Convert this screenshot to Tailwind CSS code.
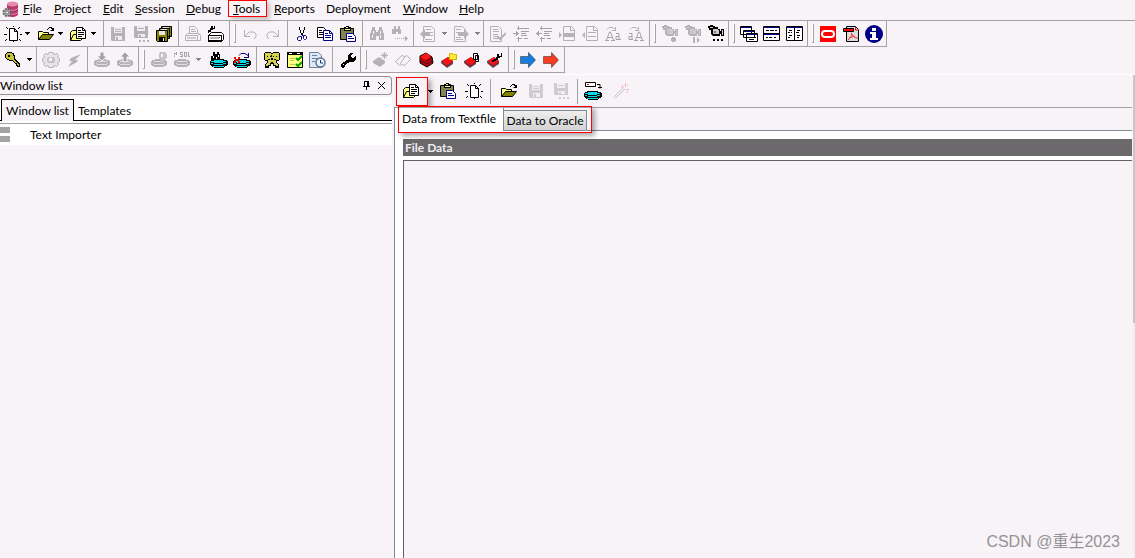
<!DOCTYPE html>
<html lang="en">
<head>
<meta charset="utf-8">
<title>Text Importer</title>
<script src="https://cdn.jsdelivr.net/npm/@tailwindcss/browser@4"></script>
</head>
<body class="h-screen flex flex-col overflow-hidden bg-[#f7f3f7] text-black text-[12px] leading-4 font-['Lato','Noto_Sans','Noto_Sans_CJK_SC',sans-serif]">

<svg class="hidden" shape-rendering="crispEdges">
  <symbol id="page" viewBox="0 0 18 16"><path d="M5.500 2.500h5l3 3v9h-8z" fill="#fff" stroke="#000"/><path d="M10.500 2.500v3h3" fill="none" stroke="#000"/><path d="M9 0h1v1H9zM2 1h1v1H2zM3 2h1v1H3zM15 1h1v1h-1zM14 2h1v1h-1zM0 8h3v1H0zM16 8h2v1h-2zM2 13h1v1H2zM1 14h1v1H1zM15 13h1v1h-1zM16 14h1v1h-1zM9 15h1v1H9z"/></symbol>
  <symbol id="open" viewBox="0 0 16 16"><path d="M.5 13.500v-8h4l1 1h5v3" fill="#ffff84" stroke="#000"/><path d="M.5 13.500l4-5h11l-4 5z" fill="#848200" stroke="#000"/><path d="M9 3h1V2h1V1h3v1h1v2h-1v-1h-1V2h-2v1h-1v1H9zM12 4h4v1h-3zM15 2h1v3h-1z"/></symbol>
  <symbol id="project" viewBox="0 0 17 16"><path d="M.5 14.500v-8l2-2h5v10z" fill="#ffff84" stroke="#000"/><path d="M6.500 1.500h6l3 3v8h-9z" fill="#fff" stroke="#000"/><path d="M12.500 1.500v3h3M8 4.500h3M8 6.500h6M8 8.500h6M8 10.500h4" fill="none" stroke="#000"/><path d="M.5 14.500l3-6h3v4h6l-2 2z" fill="#ffff84" stroke="#000"/></symbol>
  <symbol id="save" viewBox="0 0 16 16"><path d="M1 1h14v14H2l-1-1z" fill="#b5b2b5"/><path d="M4 1h8v6H4zM5 10h7v4H5z" fill="#efebef"/><path d="M5 3h6v1H5zM5 5h6v1H5zM6 11h2v3H6z" fill="#b5b2b5"/></symbol>
  <symbol id="saveas" viewBox="0 0 16 18"><path d="M1 1h14v12H2l-1-1z" fill="#b5b2b5"/><path d="M4 1h8v5H4zM5 9h7v3H5z" fill="#efebef"/><path d="M5 3h6v1H5zM6 10h2v2H6zM6 15h2v2H6zM10 15h2v2h-2zM14 15h2v2h-2z" fill="#b5b2b5"/></symbol>
  <symbol id="saveall" viewBox="0 0 16 16"><path d="M5.500.5h10v10h-10zM3.500 2.500h10v10h-10z" fill="#848200" stroke="#000"/><path d="M.5 4.500h11v11h-10l-1-1z" fill="#848200" stroke="#000"/><path d="M3 5h6v4H3zM7 1h6v1H7zM5 3h6v1H5z" fill="#e7e3e7"/><path d="M3 11h6v4H3z"/><path d="M7 12h1v3H7z" fill="#fff"/></symbol>
  <symbol id="print" viewBox="0 0 16 16"><path d="M4.500 7.500v-7h5l3 3v4" fill="#f7f3f7" stroke="#b5b2b5"/><path d="M6 3.500h4M6 5.500h5M.5 9.500l2-2h11l2 2v5h-15zM.5 9.500h12v5M12.500 9.500l3-2" fill="none" stroke="#b5b2b5"/><path d="M2 11h9v2H2z" fill="#ceCBce"/></symbol>
  <symbol id="psetup" viewBox="0 0 17 17"><path d="M1.500 10.500l3-3h10l2 2v5l-2 2h-13z" fill="#fff" stroke="#000"/><path d="M1 10h14v1H1zM1 15h14v2H1zM14 10h1v6h-1z"/><path d="M3 12h9v2H3z" fill="#b5b2b5"/><path d="M12 12h1v1h-1z" fill="red"/><path d="M1 5h2V3h1V1h2v2h1V1h1v3H6v1H4v2H2v1H1z"/></symbol>
  <symbol id="undo" viewBox="0 0 16 16"><path d="M2.500 4v6.500H8M3 10l4-4h5l2 2v3l-2 2" fill="none" stroke="#b5b2b5"/></symbol>
  <symbol id="redo" viewBox="0 0 16 16"><path d="M13.500 4v6.500H8M13 10L9 6H4L2 8v3l2 2" fill="none" stroke="#b5b2b5"/></symbol>
  <symbol id="cut" viewBox="0 0 16 16"><path d="M5 1h1v3h1v3h1v2H7V7H6V4H5zM10 1h1v3h-1v3H9v2H8V7h1V4h1z"/><path d="M8.500 8v2M5.500 10.500h2v3l-1 1h-2l-1-1v-2zM9.500 9.500h2l1 1v2l-1 1h-1l-1-1z" fill="none" stroke="#000084"/></symbol>
  <symbol id="copy" viewBox="0 0 16 16"><path d="M.5 1.500h6l2 2v8h-8z" fill="#fff" stroke="#000"/><path d="M2 4.500h3M2 6.500h5M2 8.500h5" stroke="#000"/><path d="M6.500 4.500h6l3 3v7h-9z" fill="#fff" stroke="#000084"/><path d="M12.500 4.500v3h3M8 7.500h3M8 9.500h6M8 11.500h6" fill="none" stroke="#000084"/></symbol>
  <symbol id="paste" viewBox="0 0 16 16"><path d="M.5 2.500h13v11H.5z" fill="#848252" stroke="#000"/><path d="M4 1h2V0h3v1h2v4H4z"/><path d="M5 3h5v1H5zM6 1h2v1H6z" fill="#ffff84"/><path d="M6.500 7.500h6l3 3v5h-9z" fill="#fff" stroke="#000084"/><path d="M8 10.500h4M8 12.500h6" stroke="#000084"/></symbol>
  <symbol id="find" viewBox="0 0 16 16"><path d="M3 1h3v3h1v2h2V4h1V1h3v3h1v3h1v7h-5v-4H7v4H1V7h1V4h1z" fill="#b5b2b5"/><path d="M4 5h1v3H4zM3 9h1v3H3zM11 5h1v3h-1zM11 9h1v3h-1z" fill="#f7f3f7"/></symbol>
  <symbol id="findnext" viewBox="0 0 16 16"><path d="M2 0h2v3h2V0h2v3h1v5H6V6H4v2H0V3h2z" fill="#b5b2b5"/><path d="M3 12h1v1H3zM5 12h1v1H5zM7 12h1v1H7zM9 12h1v1H9zM11 12h5v1h-5zM13 10h1v5h-1zM14 11h1v3h-1z" fill="#b5b2b5"/></symbol>
  <symbol id="back" viewBox="0 0 16 16"><path d="M3.500.5h8l3 3v12h-11z" fill="#f7f3f7" stroke="#b5b2b5"/><path d="M6 3.500h5M10 6.500h3M10 9.500h3M5 13.500h7" stroke="#b5b2b5"/><path d="M0 8l5-5v3h5v4H5v3z" fill="#b5b2b5"/></symbol>
  <symbol id="fwd" viewBox="0 0 16 16"><path d="M1.500.5h8l3 3v12h-11z" fill="#f7f3f7" stroke="#b5b2b5"/><path d="M3 3.500h5M3 6.500h3M3 11.500h5M3 13.500h7" stroke="#b5b2b5"/><path d="M16 8l-5-5v3H5v4h6v3z" fill="#b5b2b5"/></symbol>
  <symbol id="check" viewBox="0 0 16 16"><path d="M.5.500h8l3 3v12H.5z" fill="none" stroke="#b5b2b5"/><path d="M3 3.500h5M3 5.500h6M3 8.500h5M3 10.500h4M3 12.500h5" stroke="#b5b2b5"/><path d="M7 10l3 3 6-6" fill="none" stroke="#b5b2b5" stroke-width="2"/></symbol>
  <symbol id="indent" viewBox="0 0 16 16"><path d="M4 2.500h12M8 5.500h8M8 7.500h5M8 9.500h6M4 12.500h5M11 12.500h4M0 7.500h6M5.500 0v4M5.500 11v5M3.500 5v5M4.500 6v3" stroke="#a5a2a5"/></symbol>
  <symbol id="outdent" viewBox="0 0 16 16"><path d="M4 2.500h12M8 5.500h8M8 7.500h5M8 9.500h6M4 12.500h5M11 12.500h4M0 7.500h6M5.500 0v4M5.500 11v5M2.500 5v5M1.500 6v3" stroke="#a5a2a5"/></symbol>
  <symbol id="comment" viewBox="0 0 16 16"><path d="M4.500.5h8l3 3v11h-11z" fill="none" stroke="#b5b2b5"/><path d="M4 7h12v4H4zM0 6l3 3-3 3zM11 1h1v3h3v1h-4z" fill="#b5b2b5"/></symbol>
  <symbol id="uncomment" viewBox="0 0 16 16"><path d="M4.500.5h8l3 3v11h-11z" fill="none" stroke="#b5b2b5"/><path d="M6 6h8v1H6zM6 10h8v1H6zM3 6L0 9l3 3zM11 1h1v3h3v1h-4z" fill="#b5b2b5"/></symbol>
  <symbol id="upper" viewBox="0 0 16 16"><path d="M2 3.500l2-2h4l2 2M10.500 1v4M7 4.500h4" fill="none" stroke="#b5b2b5"/><path d="M0 14.500h4M6 14.500h4M1.500 14l3-8h1l3 8M3 11.500h5M11 7.500h3v6.500M14 10.500h-3v3h5" fill="none" stroke="#a5a2a5"/></symbol>
  <symbol id="lower" viewBox="0 0 16 16"><path d="M2 3.500l2-2h4l2 2M10.500 1v4M7 4.500h4" fill="none" stroke="#b5b2b5"/><path d="M6 14.500h4M12 14.500h4M7.500 14l3-8h1l3 8M9 11.500h5M1 7.500h3v6.500M4 10.500H1v3h4" fill="none" stroke="#a5a2a5"/></symbol>
  <symbol id="camera" viewBox="0 0 16 18"><path d="M0 1h2V0h3v1h2v1h3v2h2v2h1V4h3v7h-3V9h-1v2H5l-2-2V5H1V3H0z" fill="currentColor"/><path d="M2 2h3v1H2zM5 4h5v1H5zM5 5h6v4H5zM14 5h1v5h-1z" fill="#cecbce"/><path d="M6 6h2v2H6z" fill="currentColor" opacity=".4"/></symbol>
  <symbol id="rec" viewBox="0 0 16 18"><use href="#camera"/><path d="M10 12h3v1h1v3h-1v1h-3v-1H9v-3h1z" fill="#b5b2b5"/></symbol>
  <symbol id="play" viewBox="0 0 16 18"><use href="#camera"/><path d="M8 12h2v6H8zM12 12l3 3-3 3z" fill="#b5b2b5"/></symbol>
  <symbol id="dots" viewBox="0 0 16 18"><use href="#camera"/><path d="M5 14h2v2H5zM9 14h2v2H9zM13 14h2v2h-2z"/></symbol>
  <symbol id="cascade" viewBox="0 0 18 16"><path d="M.5.500h11v8H.5zM3.500 4.500h11v7h-11zM6.500 7.500h11v8h-11z" fill="#fff" stroke="#000"/><path d="M1 1h10v1H1zM4 5h10v1H4zM7 8h10v1H7z" fill="#000084"/><path d="M9 11.500h3M13 11.500h3M9 13.500h5" stroke="#000"/></symbol>
  <symbol id="tileh" viewBox="0 0 17 16"><path d="M.5.500h16v14H.5z" fill="#fff" stroke="#000"/><path d="M1 1h15v1H1zM1 8h15v1H1z" fill="#000084"/><path d="M0 7.500h17M3 4.500h3M7 4.500h4M12 4.500h2M3 11.500h2M6 11.500h3M11 11.500h2" stroke="#000"/></symbol>
  <symbol id="tilev" viewBox="0 0 17 16"><path d="M.5.500h16v14H.5z" fill="#fff" stroke="#000"/><path d="M1 1h15v1H1z" fill="#000084"/><path d="M8.500 1v14M3 4.500h3M2 6.500h2M5 6.500h1M3 9.500h3M2 11.500h2M11 4.500h3M10 6.500h3M11 9.500h3M11 11.500h2" stroke="#000"/></symbol>
  <symbol id="oracle" viewBox="0 0 16 16"><path d="M0 0h16v16H0z" fill="red"/><rect x="2" y="5" width="12" height="6" rx="3" fill="none" stroke="#fff" stroke-width="2" shape-rendering="auto"/></symbol>
  <symbol id="pdf" viewBox="0 0 16 16"><path d="M3.500.5h9l3 3v12h-12z" fill="#dedbde" stroke="#000"/><path d="M.5 2.500h10v3H.5z" fill="red" stroke="#000"/><path d="M12.500 1v3h3" fill="none" stroke="red"/><path d="M8 7c2 0 0 5-3 7M9 8c1 3 3 4 6 4M6 12l6-2" fill="none" stroke="#e73431" shape-rendering="auto"/></symbol>
  <symbol id="info" viewBox="0 0 18 18"><circle cx="9" cy="9" r="9" fill="#000084"/><path d="M7 3h4v3H7zM5 7h6v6h2v2H5v-2h2V9H5z" fill="#fff"/></symbol>

  <symbol id="key" viewBox="0 0 16 16"><path d="M1 1h1V0h5v1h2v2h1v4h1v1h1v1h1v1h1v1h1v4h-3v-1h-1v-2h-1v-1H9v-1H8V9H4V8H2V7H1V6H0V2h1z"/><path d="M2 1h5v1h1v2h1v4h1v1h1v1h1v1h1v1h1v2h-1v-1h-1v-2h-2v-1H9V9H8V8H4V7H2V6H1V2h1z" fill="#c6c339"/><path d="M3 3h2v2H3z"/></symbol>
  <symbol id="gear" viewBox="0 0 18 16"><path d="M7 .5h4l1 2 3-1 1.500 2-1 2 2 1v3l-2 1 1 2-2 2-2.500-1-1 2H7l-1-2-2.500 1-2-2 1-2-2-1v-3l2-1-1-2 2-2L6 2.500z" fill="#e7e3e7" stroke="#b5b2b5"/><path d="M6 5h6v1h1v4h-1v1H6v-1H5V6h1z" fill="#c6c3c6"/><path d="M7 6h3v3H7z" fill="#f7f3f7"/></symbol>
  <symbol id="bolt" viewBox="0 0 16 16"><path d="M15 2L5 6 3 9h3l-4 6 9-5 1-2H9z" fill="#b5b2b5"/></symbol>
  <symbol id="disk" viewBox="0 0 16 16"><path d="M0 9h1V8h3V7h8v1h3v1h1v4h-1v1h-2v1H3v-1H1v-1H0z" fill="#b5b2b5"/><path d="M3 9h10v1H3zM2 11h1v1h10v-1h1v1h-1v1H3v-1H2z" fill="#dedbde"/></symbol>
  <symbol id="commit" viewBox="0 0 16 16"><use href="#disk"/><path d="M6 0h4v4h3L8 9 3 4h3z" fill="#a5a2a5" stroke="#f7f3f7"/></symbol>
  <symbol id="rollback" viewBox="0 0 16 16"><use href="#disk"/><path d="M6 10h4V5h3L8 0 3 5h3z" fill="#a5a2a5" stroke="#f7f3f7"/></symbol>
  <symbol id="explain" viewBox="0 0 16 16"><use href="#disk"/><path d="M9 0h5l2 2v4l-3 2v3h-3V8L8 6V2z" fill="#c6c3c6"/><path d="M10 2h2v3h-2z" fill="#f7f3f7"/></symbol>
  <symbol id="sql" viewBox="0 0 16 16"><use href="#disk"/><path d="M0 5.500v-4h3M2.500 0v3M6 .5h3M6.500 0v2.500h2V5M6 4.500h2M10.500 0v4.500h2V.5h-2M14.500 0v4.500h2" fill="none" stroke="#a5a2a5"/></symbol>
  <symbol id="cdisk" viewBox="0 0 18 16"><path d="M0 9h1V8h2V7h11v1h3v1h1v4h-1v1h-2v1h-1v1H4v-1H2v-1H1v-1H0z"/><path d="M4 8h9v1h3v1h-3v1H4v-1H1V9h3zM1 11h2v1h10v-1h3v1h-3v1H4v-1H1zM3 14h11v1H3z" fill="#00dbe7"/></symbol>
  <symbol id="dfind" viewBox="0 0 18 16"><use href="#cdisk"/><path d="M3 0h2v2h2V0h2v2h1v6H7V5H6v3H1V4h2z"/><path d="M3 4h1v2H3zM8 3h1v2H8z" fill="#fff"/></symbol>
  <symbol id="drecomp" viewBox="0 0 18 16"><use href="#cdisk"/><path d="M6 3.500l2-2h4l3 2M15.500 1v5M11 5.500h5" fill="none" stroke="#000084"/><path d="M1 5h2v2h2V5h2v2H6v2h1v2H5V9H3v2H1V9h1V7H1z" fill="red"/></symbol>
  <symbol id="masks" viewBox="0 0 16 16"><path d="M1 0h6v1h2V0h6v1h1v7h-1v1h-2v2h1v1h1v4h-4v-2H9v-2H7v2H5v2H1v-4h1v-1h1V9H1V8H0V1h1z"/><path d="M1 1h6v1h2V1h6v7h-3v3h1v1h1v2h-2v-1h-2v-2H9v-1H7v1H6v2H4v1H2v-2h1v-1h1V8H1z" fill="#d6d34a"/><path d="M3 4h1v1H3zM6 4h1v1H6zM9 4h1v1H9zM12 4h1v1h-1zM7 6h2v2H7zM4 7h2v1H4zM10 7h2v1h-2zM7 3h1v2H7z"/></symbol>
  <symbol id="todo" viewBox="0 0 16 16"><path d="M.5 2.500h15v13H.5z" fill="#ffff84" stroke="#000"/><path d="M0 0h16v3H0z"/><path d="M2 1h3v1H2zM10 1h3v1h-3z" fill="#fff"/><path d="M3 6.500h5M3 8.500h4M3 12.500h5" stroke="#c6c352"/><path d="M9 6l2 2 4-4M9 12l2 2 4-4" fill="none" stroke="#00a200" stroke-width="2"/></symbol>
  <symbol id="clockdoc" viewBox="0 0 17 16" shape-rendering="auto"><path d="M.5.500h9l3 3v12H.5z" fill="#dee7f7" stroke="#6b829c"/><path d="M3 3.500h5M3 6.500h6M3 9.500h3" stroke="#6b829c"/><circle cx="11.500" cy="10.500" r="4.500" fill="#e7f3ff" stroke="#5a7194" stroke-width="1.500"/><path d="M11.500 8v3h2.500" fill="none" stroke="#213c63"/></symbol>
  <symbol id="wrench" viewBox="0 0 16 16"><path d="M1 12h1v-1h1v-1h2V9h1V8h2V3h1V2h1V1h3v1h-1v1h-1v2h1v1h2V5h1V4h1v4h-1v1h-1v1H9v1H7v1H6v1H5v2H4v1H2v-1H1z"/><path d="M3 12h1v1H3z" fill="#fff"/></symbol>
  <symbol id="gbook" viewBox="0 0 16 16"><path d="M1 9l6-4 6 4v2l-5 4-7-4z" fill="#b5b2b5"/><path d="M12.500 0v7M9 3.500h7M10 1l5 5M15 1l-5 5" stroke="#b5b2b5"/></symbol>
  <symbol id="obook" viewBox="0 0 16 16" shape-rendering="auto"><path d="M.5 9.500L7 3.500l3 1 2-1 3.500 4-6 6-3-1-2 1z" fill="#f7f3f7" stroke="#b5b2b5"/><path d="M5 12l5-7.500" stroke="#b5b2b5"/></symbol>
  <symbol id="book" viewBox="0 0 16 16"><path d="M2 4l6-3 6 4 1 6-6 4-7-4z" fill="#c60000" stroke="#000"/><path d="M2 5l6-4 5 3-5 4z" fill="#ff1818"/><path d="M8 9l6-3M9 12l5-3M2 8l7 4" fill="none" stroke="#311c31"/></symbol>
  <symbol id="rbook" viewBox="0 0 16 16"><path d="M0 9l7-4 5 4v3l-6 4-6-5z" fill="#5a5163"/><path d="M1 9l6-4 5 4-6 4z" fill="#ff1010"/><path d="M1 11l5 3 6-4" fill="none" stroke="#c60000"/></symbol>
  <symbol id="bookopen" viewBox="0 0 16 16"><use href="#rbook"/><path d="M8.500 1.500h3l1 1h3v5h-7z" fill="#ffeb31" stroke="#d6b200"/></symbol>
  <symbol id="bookcopy" viewBox="0 0 16 16"><use href="#rbook"/><path d="M9.500 1.500h4v6h-4zM11.500 3.500h3v6h-3z" fill="#f7f3f7" stroke="#000"/></symbol>
  <symbol id="bookedit" viewBox="0 0 16 16"><use href="#rbook"/><path d="M5 10V8h2V7h2V5h1V2h2v2h2V1h1v4h-2v1h-2v2H9v1H7v1z"/></symbol>
  <symbol id="arrow" viewBox="0 0 16 16" shape-rendering="auto"><path d="M.5 4.500h8v-4L15.500 8l-7 7.500v-4h-8z" fill="currentColor" stroke="#00000066"/></symbol>
  <symbol id="down" viewBox="0 0 5 3"><path d="M0 0h5v1H4v1H3v1H2V2H1V1H0z" fill="currentColor"/></symbol>
  <symbol id="todisk" viewBox="0 0 18 18"><g transform="translate(0 2)"><use href="#cdisk" width="18" height="16"/></g><path d="M1.500.5h10v4h-10z" fill="#fff" stroke="#000"/><path d="M3 2h2v1H3z" fill="red"/><path d="M13 2.500h3v4M14 5.500h4" fill="none" stroke="#000"/></symbol>
  <symbol id="wand" viewBox="0 0 16 16"><path d="M1 14L10 5M2 15.500L12 6" fill="none" stroke="#c6c3c6"/><path d="M12.500 0v4M9 2l2 2M15 2l-1 1M13 6.500h3M13 8l2 2M8 4.500h2" stroke="#f0b5c0"/></symbol>
  <symbol id="app" viewBox="0 0 17 17" shape-rendering="auto"><path d="M5 3v10c0 4 11 4 11 0V3z" fill="#b5386b"/><path d="M5 7c1 3 10 3 11 0M5 11c1 3 10 3 11 0" fill="none" stroke="#e78aad"/><ellipse cx="10.500" cy="3" rx="5.500" ry="2.500" fill="#e78aad"/><circle cx="5" cy="11.500" r="3.500" fill="#c6c3c6" stroke="#6b696b" stroke-width="2" stroke-dasharray="2 .8"/><circle cx="5" cy="11.500" r="1.500" fill="#fff" stroke="#6b696b"/></symbol>
</svg>

<nav class="relative h-5 shrink-0 flex items-center gap-3 pl-[2px] pb-[2px] whitespace-nowrap" aria-label="Menu">
  <svg class="size-[17px] shrink-0 -mr-2"><use href="#app"/></svg>
  <button class="w-[19px] text-left"><u>F</u>ile</button>
  <button class="w-[37px] text-left"><u>P</u>roject</button>
  <button class="w-5 text-left"><u>E</u>dit</button>
  <button class="w-[39px] text-left"><u>S</u>ession</button>
  <button class="w-[35px] text-left"><u>D</u>ebug</button>
  <button class="relative w-[29px] text-left"><u>T</u>ools<span class="absolute -inset-x-[5px] -top-px bottom-0 border border-[#f00] shadow-[3px_3px_4px_#0003]"></span></button>
  <button class="w-10 text-left"><u>R</u>eports</button>
  <button class="w-[65px] text-left">Deployment</button>
  <button class="w-11 text-left"><u>W</u>indow</button>
  <button class="text-left"><u>H</u>elp</button>
</nav>

<div class="shrink-0 h-[27px] border-t border-[#a5a2a5] flex">
  <div class="flex border-b border-[#a5a2a5] *:h-full *:shrink-0 [&>button]:flex [&>button]:items-center [&>button]:justify-center" role="toolbar" aria-label="Main">
    <button class="w-[23px] ml-px" aria-label="New"><svg class="w-[18px] h-4"><use href="#page"/></svg></button>
    <button class="w-[10px] pr-1" aria-label="New options"><svg class="w-[5px] h-[3px]"><use href="#down"/></svg></button>
    <button class="w-[23px]" aria-label="Open"><svg class="size-4"><use href="#open"/></svg></button>
    <button class="w-[10px] pr-1" aria-label="Open options"><svg class="w-[5px] h-[3px]"><use href="#down"/></svg></button>
    <button class="w-[23px]" aria-label="Open project"><svg class="w-[17px] h-4"><use href="#project"/></svg></button>
    <button class="w-[10px] pr-1" aria-label="Project options"><svg class="w-[5px] h-[3px]"><use href="#down"/></svg></button>
    <span class="w-px mx-[2px] ml-[3px] bg-[#a5a2a5]"></span>
    <button class="w-[23px]" aria-label="Save"><svg class="size-4"><use href="#save"/></svg></button>
    <button class="w-[23px]" aria-label="Save as"><svg class="w-4 h-[18px]"><use href="#saveas"/></svg></button>
    <button class="w-[23px]" aria-label="Save all"><svg class="size-4"><use href="#saveall"/></svg></button>
    <span class="w-px mx-[2px] ml-[3px] bg-[#a5a2a5]"></span>
    <button class="w-[23px]" aria-label="Print"><svg class="size-4"><use href="#print"/></svg></button>
    <button class="w-[23px]" aria-label="Print setup"><svg class="size-[17px]"><use href="#psetup"/></svg></button>
    <span class="w-px bg-[#a5a2a5] ml-[2px]"></span>
    <span class="w-2 py-[3px] pl-1"><span class="block h-full w-[2px] border-r border-b border-[#a5a2a5] bg-white"></span></span>
    <button class="w-[23px]" aria-label="Undo"><svg class="size-4"><use href="#undo"/></svg></button>
    <button class="w-[23px]" aria-label="Redo"><svg class="size-4"><use href="#redo"/></svg></button>
    <span class="w-px mx-[2px] ml-[3px] bg-[#a5a2a5]"></span>
    <button class="w-[23px]" aria-label="Cut"><svg class="size-4"><use href="#cut"/></svg></button>
    <button class="w-[23px]" aria-label="Copy"><svg class="size-4"><use href="#copy"/></svg></button>
    <button class="w-[23px]" aria-label="Paste"><svg class="size-4"><use href="#paste"/></svg></button>
    <span class="w-px mx-[2px] ml-[3px] bg-[#a5a2a5]"></span>
    <button class="w-[23px]" aria-label="Find"><svg class="size-4"><use href="#find"/></svg></button>
    <button class="w-[23px]" aria-label="Find next"><svg class="size-4"><use href="#findnext"/></svg></button>
    <span class="w-px mx-[2px] bg-[#a5a2a5]"></span>
    <button class="w-[23px]" aria-label="Back"><svg class="size-4"><use href="#back"/></svg></button>
    <button class="w-[10px] text-[#848284]" aria-label="Back history"><svg class="w-[5px] h-[3px]"><use href="#down"/></svg></button>
    <button class="w-[23px]" aria-label="Forward"><svg class="size-4"><use href="#fwd"/></svg></button>
    <button class="w-[10px] text-[#848284]" aria-label="Forward history"><svg class="w-[5px] h-[3px]"><use href="#down"/></svg></button>
    <span class="w-px mx-px mr-[2px] bg-[#a5a2a5]"></span>
    <button class="w-[23px]" aria-label="Check"><svg class="size-4"><use href="#check"/></svg></button>
    <button class="w-[23px]" aria-label="Indent"><svg class="size-4"><use href="#indent"/></svg></button>
    <button class="w-[23px]" aria-label="Unindent"><svg class="size-4"><use href="#outdent"/></svg></button>
    <button class="w-[23px]" aria-label="Comment"><svg class="size-4"><use href="#comment"/></svg></button>
    <button class="w-[23px]" aria-label="Uncomment"><svg class="size-4"><use href="#uncomment"/></svg></button>
    <button class="w-[23px]" aria-label="Uppercase"><svg class="size-4"><use href="#upper"/></svg></button>
    <button class="w-[23px]" aria-label="Lowercase"><svg class="size-4"><use href="#lower"/></svg></button>
    <span class="w-px bg-[#a5a2a5] ml-[2px]"></span>
    <span class="w-2 py-[3px] pl-1"><span class="block h-full w-[2px] border-r border-b border-[#a5a2a5] bg-white"></span></span>
    <button class="w-[23px] text-[#b5b2b5]" aria-label="Record macro"><svg class="w-4 h-[18px]"><use href="#rec"/></svg></button>
    <button class="w-[23px] text-[#b5b2b5]" aria-label="Play macro"><svg class="w-4 h-[18px]"><use href="#play"/></svg></button>
    <button class="w-[23px]" aria-label="Macro library"><svg class="w-4 h-[18px]"><use href="#dots"/></svg></button>
    <span class="w-px bg-[#a5a2a5] ml-px"></span>
    <span class="w-2 py-[3px] pl-1"><span class="block h-full w-[2px] border-r border-b border-[#a5a2a5] bg-white"></span></span>
    <button class="w-[23px]" aria-label="Cascade"><svg class="w-[18px] h-4"><use href="#cascade"/></svg></button>
    <button class="w-[23px]" aria-label="Tile horizontally"><svg class="w-[17px] h-4"><use href="#tileh"/></svg></button>
    <button class="w-[23px]" aria-label="Tile vertically"><svg class="w-[17px] h-4"><use href="#tilev"/></svg></button>
    <span class="w-px bg-[#a5a2a5] ml-px"></span>
    <span class="w-2 py-[3px] pl-1"><span class="block h-full w-[2px] border-r border-b border-[#a5a2a5] bg-white"></span></span>
    <button class="w-[23px]" aria-label="Oracle"><svg class="size-4"><use href="#oracle"/></svg></button>
    <button class="w-[23px]" aria-label="PDF manual"><svg class="size-4"><use href="#pdf"/></svg></button>
    <button class="w-[23px]" aria-label="Information"><svg class="size-[18px]"><use href="#info"/></svg></button>
    <span class="w-px bg-[#a5a2a5] ml-px"></span>
  </div>
</div>

<div class="shrink-0 h-[26px] flex">
  <div class="flex border-b border-[#a5a2a5] *:h-full *:shrink-0 [&>button]:flex [&>button]:items-center [&>button]:justify-center" role="toolbar" aria-label="Session">
    <button class="w-[23px] ml-px" aria-label="Log on"><svg class="size-4"><use href="#key"/></svg></button>
    <button class="w-[11px]" aria-label="Log on options"><svg class="w-[5px] h-[3px]"><use href="#down"/></svg></button>
    <span class="w-px mx-[2px] ml-px bg-[#a5a2a5]"></span>
    <button class="w-[23px]" aria-label="Execute"><svg class="w-[18px] h-4"><use href="#gear"/></svg></button>
    <button class="w-[23px]" aria-label="Break"><svg class="size-4"><use href="#bolt"/></svg></button>
    <span class="w-px mx-[2px] bg-[#a5a2a5]"></span>
    <button class="w-[23px]" aria-label="Commit"><svg class="size-4"><use href="#commit"/></svg></button>
    <button class="w-[23px]" aria-label="Rollback"><svg class="size-4"><use href="#rollback"/></svg></button>
    <span class="w-px bg-[#a5a2a5] ml-[2px]"></span>
    <span class="w-2 py-[3px] pl-1"><span class="block h-full w-[2px] border-r border-b border-[#a5a2a5] bg-white"></span></span>
    <button class="w-[23px]" aria-label="Explain plan"><svg class="size-4"><use href="#explain"/></svg></button>
    <button class="w-[23px]" aria-label="SQL"><svg class="size-4"><use href="#sql"/></svg></button>
    <button class="w-[10px] text-[#848284]" aria-label="SQL options"><svg class="w-[5px] h-[3px]"><use href="#down"/></svg></button>
    <button class="w-[23px] ml-1" aria-label="Find database objects"><svg class="w-[18px] h-4"><use href="#dfind"/></svg></button>
    <button class="w-[23px]" aria-label="Compile invalid objects"><svg class="w-[18px] h-4"><use href="#drecomp"/></svg></button>
    <span class="w-px mx-[3px] bg-[#a5a2a5]"></span>
    <button class="w-[23px]" aria-label="Beautifier"><svg class="size-4"><use href="#masks"/></svg></button>
    <button class="w-[23px]" aria-label="To-do list"><svg class="size-4"><use href="#todo"/></svg></button>
    <button class="w-[23px]" aria-label="Event monitor"><svg class="w-[17px] h-4"><use href="#clockdoc"/></svg></button>
    <span class="w-px mx-[3px] bg-[#a5a2a5]"></span>
    <button class="w-[23px]" aria-label="Preferences"><svg class="size-4"><use href="#wrench"/></svg></button>
    <span class="w-px bg-[#a5a2a5] ml-px"></span>
    <span class="w-[7px] py-[3px] pl-1"><span class="block h-full w-[2px] border-r border-b border-[#a5a2a5] bg-white"></span></span>
    <button class="w-[23px]" aria-label="New book"><svg class="size-4"><use href="#gbook"/></svg></button>
    <button class="w-[23px]" aria-label="Read"><svg class="size-4"><use href="#obook"/></svg></button>
    <button class="w-[23px]" aria-label="Book"><svg class="size-4"><use href="#book"/></svg></button>
    <button class="w-[23px]" aria-label="Open book"><svg class="size-4"><use href="#bookopen"/></svg></button>
    <button class="w-[23px]" aria-label="Copy book"><svg class="size-4"><use href="#bookcopy"/></svg></button>
    <button class="w-[23px]" aria-label="Configure book"><svg class="size-4"><use href="#bookedit"/></svg></button>
    <span class="w-px bg-[#a5a2a5] ml-[2px]"></span>
    <span class="w-[7px] py-[3px] pl-1"><span class="block h-full w-[2px] border-r border-b border-[#a5a2a5] bg-white"></span></span>
    <button class="w-[23px] text-[#187ddd]" aria-label="Next"><svg class="size-4"><use href="#arrow"/></svg></button>
    <button class="w-[23px] text-[#f73c21]" aria-label="Next error"><svg class="size-4"><use href="#arrow"/></svg></button>
    <span class="w-px bg-[#a5a2a5] ml-[2px]"></span>
  </div>
</div>

<div class="flex-1 min-h-0 flex border-t border-white mt-px">
  <aside class="w-[392px] shrink-0 mr-[2px] pt-px">
    <header class="h-[19px] flex items-center border border-l-0 border-[#949294] rounded-r-sm pr-[2px]">
      <h2 class="flex-1">Window list</h2>
      <button class="w-[15px] flex justify-center" aria-label="Pin"><svg class="w-[7px] h-[9px]" viewBox="0 0 7 9" shape-rendering="crispEdges"><path d="M1 0h5v5h1v1H4v3H3V6H0V5h1z"/><path d="M2 1h2v4H2z" fill="#fff"/></svg></button>
      <button class="w-[15px] flex justify-center" aria-label="Close"><svg class="size-[9px]" viewBox="0 0 9 9"><path d="M1 1l7 7M8 1L1 8" stroke="#000"/></svg></button>
    </header>
    <div class="mt-[2px] bg-white">
      <div class="flex items-end h-6 pt-[2px] border-b border-black" role="tablist">
        <button class="ml-px h-[22px] w-[73px] -mb-px border border-b-0 border-black bg-[#f7f3f7] whitespace-nowrap" role="tab" aria-selected="true">Window list</button>
        <button class="h-[22px] px-1 pt-[3px]" role="tab" aria-selected="false">Templates</button>
      </div>
      <ul class="mt-[2px] border-t border-[#a5a2a5]">
        <li class="h-[21px] flex items-center">
          <span class="w-[10px] h-[15px] border-y-[6px] border-[#a5a2a5]"></span>
          <span class="ml-5">Text Importer</span>
        </li>
      </ul>
    </div>
  </aside>

  <main class="flex-1 min-w-0 flex flex-col">
    <div class="h-8 shrink-0 flex items-center pl-[5px] [&>button]:h-full [&>button]:flex [&>button]:items-center [&>button]:justify-center" role="toolbar" aria-label="Importer">
      <button class="relative w-6" aria-label="Open data file"><svg class="w-[17px] h-4"><use href="#project"/></svg><span class="absolute -left-[3px] -right-[5px] top-[2px] bottom-px border border-[#f00] shadow-[3px_3px_5px_#0005]"></span></button>
      <button class="w-[13px] pl-[2px]" aria-label="Data file options"><svg class="w-[5px] h-[3px]"><use href="#down"/></svg></button>
      <button class="w-[23px]" aria-label="Paste data"><svg class="size-4"><use href="#paste"/></svg></button>
      <button class="w-[30px]" aria-label="New definition"><svg class="w-[18px] h-4"><use href="#page"/></svg></button>
      <span class="w-px h-[25px] mx-[2px] ml-px bg-[#a5a2a5]"></span>
      <button class="w-[31px]" aria-label="Open definition"><svg class="size-4"><use href="#open"/></svg></button>
      <button class="w-[23px]" aria-label="Save definition"><svg class="size-4 opacity-60"><use href="#save"/></svg></button>
      <button class="w-[28px]" aria-label="Save definition as"><svg class="w-4 h-[18px] opacity-60"><use href="#saveas"/></svg></button>
      <span class="w-px h-[25px] mx-[2px] bg-[#a5a2a5]"></span>
      <button class="w-[26px]" aria-label="Import"><svg class="size-[18px]"><use href="#todisk"/></svg></button>
      <button class="w-[30px]" aria-label="Wizard"><svg class="size-4"><use href="#wand"/></svg></button>
    </div>
    <div class="flex-1 min-h-0 flex flex-col border-l border-[#848a94]">
      <div class="relative h-6 shrink-0 mr-[3px] flex items-end border-t border-b border-t-[#a5a2a5] border-b-[#848a94]" role="tablist">
        <button class="h-[23px] -mb-px w-[109px] pb-px pl-[7px] text-left bg-white border-r border-[#848a94] whitespace-nowrap" role="tab" aria-selected="true">Data from Textfile</button>
        <button class="h-[20px] w-[83px] bg-linear-to-b from-[#efefef] to-[#d4d2d4] border border-b-0 border-l-0 border-[#848a94] whitespace-nowrap" role="tab" aria-selected="false">Data to Oracle</button>
        <span class="absolute left-[3px] w-[194px] -top-[2px] -bottom-[3px] border border-[#f00] shadow-[3px_3px_5px_#0005]"></span>
      </div>
      <section class="flex-1 min-h-0 flex flex-col bg-white pl-2 pt-2 mr-[3px]">
        <h3 class="h-[17px] leading-[17px] shrink-0 bg-[#6b696b] text-[#f0eef0] font-bold pl-[2px]">File Data</h3>
        <div class="flex-1 mt-1 border-l border-t border-[#636163] bg-[#f7f3f7] flex items-end justify-end pr-3 pb-[6px]">
          <p class="text-base leading-5 text-[#949294] font-['Liberation_Sans','Noto_Sans_CJK_SC',sans-serif]">CSDN @重生2023</p>
        </div>
      </section>
    </div>
  </main>
  <div class="w-[2px] shrink-0 -ml-[2px] bg-[#efefef]"><div class="h-[248px] bg-[#c6c6c6]"></div></div>
</div>
</body>
</html>
